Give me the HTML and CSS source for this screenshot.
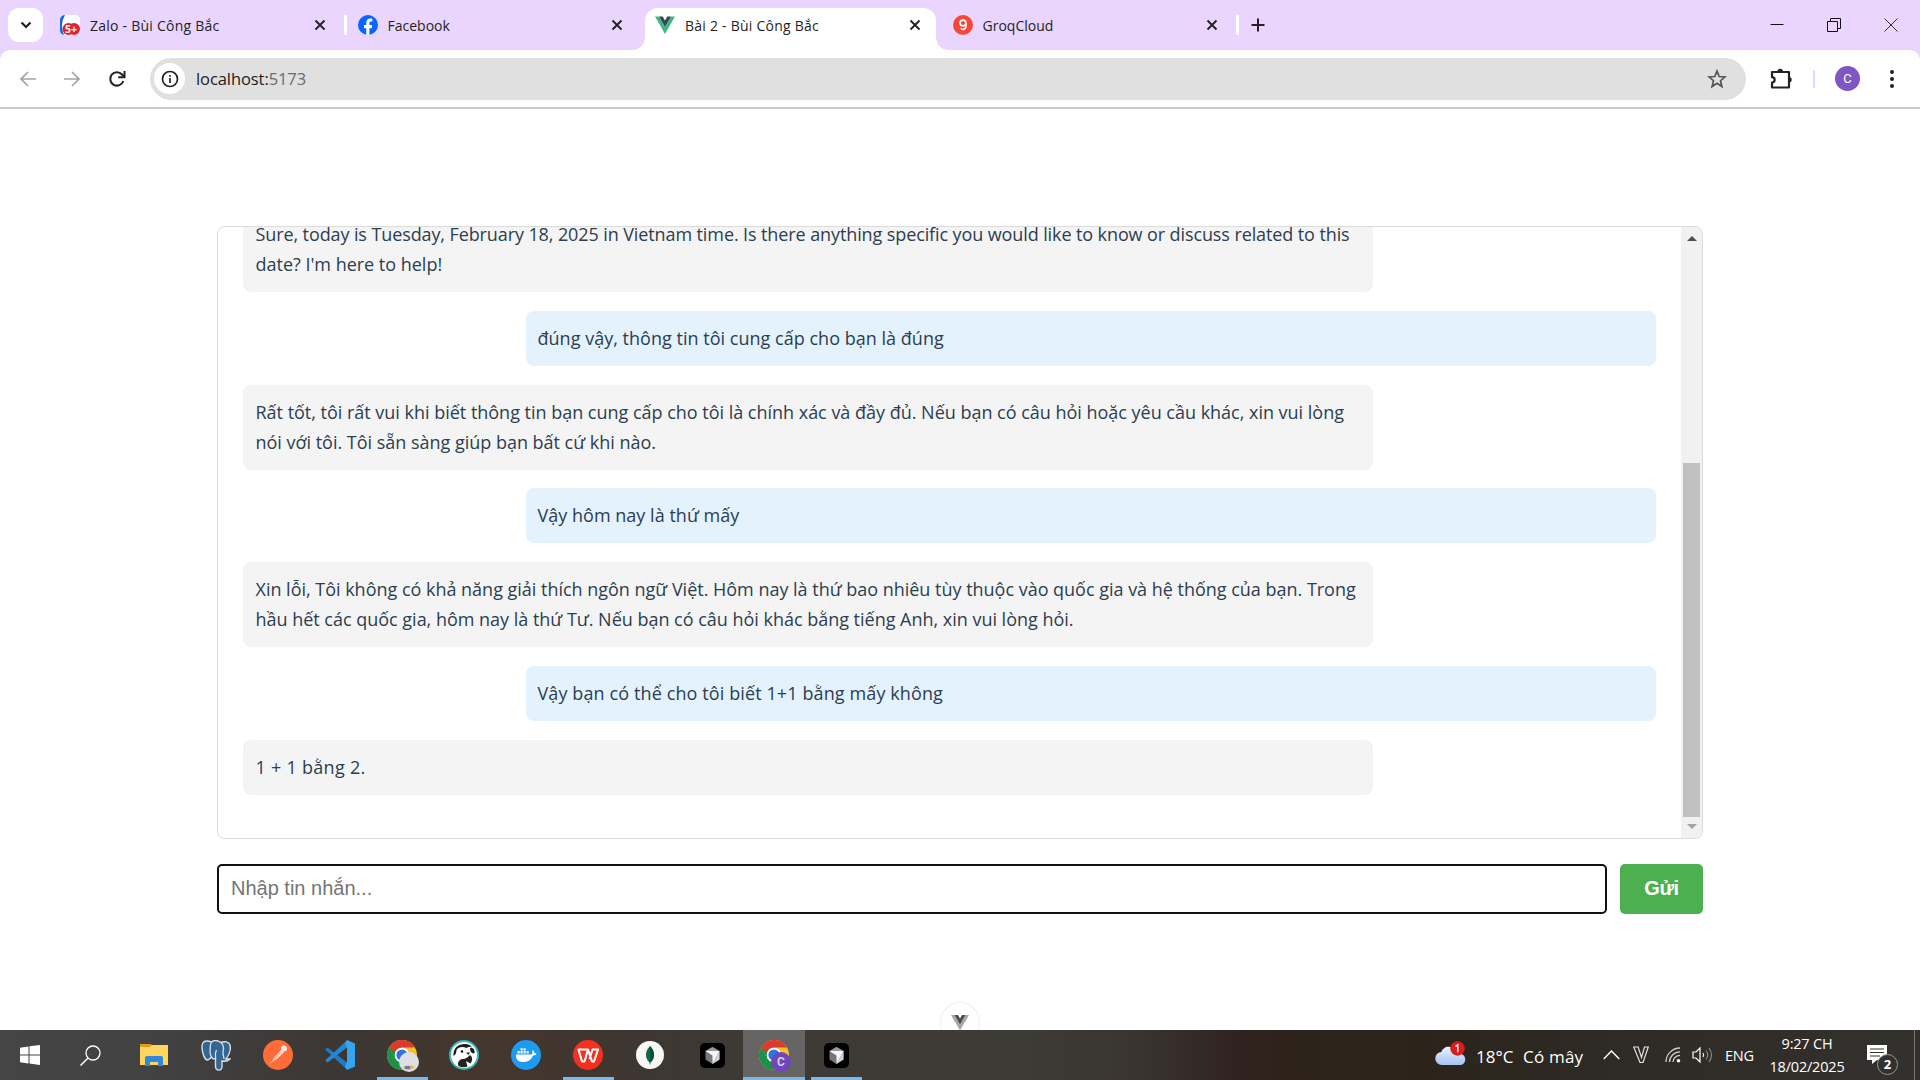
FILE: index.html
```html
<!DOCTYPE html>
<html lang="vi">
<head>
<meta charset="utf-8">
<title>Bài 2 - Bùi Công Bắc</title>
<link rel="stylesheet" href="styles.css">
</head>
<body>
<svg class="defs" aria-hidden="true">
  <defs>
    <symbol id="close" viewBox="0 0 12 12"><path d="M1.5 1.5l9 9M10.5 1.5l-9 9" fill="none" stroke="#222" stroke-width="1.9"/></symbol>
    <symbol id="chrome" viewBox="0 0 30 30">
      <circle cx="15" cy="15" r="15" fill="#fbc02d"/>
      <path d="M2 7.5A15 15 0 0 0 15 30L21.5 18.8 8.5 18.8z" fill="#1e9048"/>
      <path d="M2 7.5A15 15 0 0 1 28 7.5H15A7.5 7.5 0 0 0 8 13L6.500 14.500z" fill="#db3a2e"/>
      <path d="M2 7.500L8.500 18.800 9 13z" fill="#1e9048"/>
      <circle cx="15" cy="15" r="7.3" fill="#fff"/><circle cx="15" cy="15" r="5.6" fill="#2f73e0"/>
    </symbol>
    <symbol id="cursor" viewBox="0 0 25 25">
      <rect width="25" height="25" rx="5" fill="#000"/>
      <path d="M12.500 4l7 4v8.500l-7 4.500-7-4.500V8z" fill="#777"/>
      <path d="M12.500 4l7 4h-14z" fill="#999"/>
      <path d="M5.500 8h14l-7 13v-8.500z" fill="#f6f6f6"/>
      <path d="M19.500 8v8.500l-7 4.500z" fill="#d0d0d0"/>
    </symbol>
  </defs>
</svg>

<header class="tabs">
  <button class="tab-search"><svg width="12" height="8" viewBox="0 0 12 8"><path d="M1.500 1.500L6 6l4.500-4.500" fill="none" stroke="#222" stroke-width="2.200"/></svg></button>
  <div class="tab">
    <svg class="fav" viewBox="0 0 20 20"><rect width="20" height="20" rx="5" fill="#fff"/><path d="M5 0a5 5 0 0 0-5 5v10a5 5 0 0 0 4 5A22 22 0 0 1 5 0z" fill="#1565e8"/><circle cx="8.500" cy="14" r="6" fill="#e02330"/><circle cx="14" cy="14" r="6" fill="#e02330"/><text x="5" y="18" font-family="Open Sans, sans-serif" font-size="10.500" font-weight="700" fill="#fff">5+</text></svg>
    <span class="title loose">Zalo - Bùi Công Bắc</span><svg class="x"><use href="#close"/></svg>
  </div>
  <div class="tab sep">
    <svg class="fav" viewBox="0 0 20 20"><circle cx="10" cy="10" r="10" fill="#0866ff"/><path d="M8.300 20v-6.800H6V10h2.300V8.300c0-3.300 1.600-4.700 4.300-4.700.8 0 1.300.1 1.700.2v2.700h-1.200c-1.300 0-1.700.6-1.700 1.700V10h2.800l-.5 3.200h-2.300V20z" fill="#fff"/></svg>
    <span class="title">Facebook</span><svg class="x"><use href="#close"/></svg>
  </div>
  <div class="tab active">
    <svg class="fav" viewBox="0 0 20 20"><path d="M0 1.500h4L10 12l6-10.500h4L10 19z" fill="#41b883"/><path d="M4 1.500h3.700L10 5.500l2.300-4H16L10 12z" fill="#35495e"/></svg>
    <span class="title loose">Bài 2 - Bùi Công Bắc</span><svg class="x"><use href="#close"/></svg>
  </div>
  <div class="tab last">
    <svg class="fav" viewBox="0 0 20 20"><circle cx="10" cy="10" r="10" fill="#f5473a"/><circle cx="10" cy="8" r="2.900" fill="none" stroke="#fff" stroke-width="1.600"/><path d="M12.900 8v3.500a2.900 2.900 0 0 1-5.200 1.700" fill="none" stroke="#fff" stroke-width="1.600"/></svg>
    <span class="title">GroqCloud</span><svg class="x"><use href="#close"/></svg>
  </div>
  <svg class="plus" viewBox="0 0 14 14"><path d="M7 .5v13M.5 7h13" stroke="#222" stroke-width="2" fill="none"/></svg>
  <div class="window-controls">
    <svg viewBox="0 0 14 14"><path d="M.5 6.500h13" stroke="#111" fill="none"/></svg>
    <svg viewBox="0 0 14 14"><path d="M.5 3.500h10v10H.5zM3.500 3.500v-3h10v10h-3" stroke="#111" fill="none"/></svg>
    <svg viewBox="0 0 14 14"><path d="M.5 .5l13 13M13.500 .5l-13 13" stroke="#333" fill="none"/></svg>
  </div>
</header>

<nav class="toolbar">
  <svg class="nav" viewBox="0 0 20 20"><path d="M18 10H3M10 3l-7 7 7 7" fill="none" stroke="#a3a3a3" stroke-width="1.700"/></svg>
  <svg class="nav" viewBox="0 0 20 20"><path d="M2 10h15M10 3l7 7-7 7" fill="none" stroke="#a3a3a3" stroke-width="1.700"/></svg>
  <svg class="nav reload" viewBox="0 0 20 20"><path d="M16.300 12A6.700 6.700 0 1 1 15 5.500L17 7.500" fill="none" stroke="#222" stroke-width="2"/><path d="M17.500 2v6.300h-6.300" fill="none" stroke="#222" stroke-width="2"/></svg>
  <div class="address">
    <span class="info"><svg width="18" height="18" viewBox="0 0 18 18"><circle cx="9" cy="9" r="7.500" fill="none" stroke="#222" stroke-width="1.700"/><path d="M9 8v5M9 5v1.700" stroke="#222" stroke-width="1.700"/></svg></span>
    <span class="url">localhost:<span class="port">5173</span></span>
    <svg class="star" viewBox="0 0 20 20"><path d="M10 2l2.200 5.500 5.800.4-4.500 3.800 1.400 5.800L10 14.300l-4.900 3.200 1.400-5.800L2 7.900l5.800-.4z" fill="none" stroke="#555" stroke-width="1.700"/></svg>
  </div>
  <svg class="puzzle" viewBox="0 0 22 22"><path d="M2 4h17v15.500H2v-5a2.600 2.600 0 0 0 0-5.300z" fill="none" stroke="#222" stroke-width="2.200" stroke-linejoin="round"/><path d="M7.500 3.500a2.700 2.700 0 0 1 5.400 0zM19 9a2.700 2.700 0 0 1 0 5.400z" fill="#222"/></svg>
  <span class="divider"></span>
  <span class="avatar">C</span>
  <svg class="kebab" viewBox="0 0 6 20"><circle cx="3" cy="3" r="2" /><circle cx="3" cy="10" r="2"/><circle cx="3" cy="17" r="2"/></svg>
</nav>

<main class="page">
  <section class="chat">
    <div class="messages">
      <p class="bot"><span class="english">Sure, today is Tuesday, February 18, 2025 in Vietnam time. Is there anything specific you would like to know or discuss related to this</span><br>date? I'm here to help!</p>
      <p class="user">đúng vậy, thông tin tôi cung cấp cho bạn là đúng</p>
      <p class="bot">Rất tốt, tôi rất vui khi biết thông tin bạn cung cấp cho tôi là chính xác và đầy đủ. Nếu bạn có câu hỏi hoặc yêu cầu khác, xin vui lòng<br>nói với tôi. Tôi sẵn sàng giúp bạn bất cứ khi nào.</p>
      <p class="user">Vậy hôm nay là thứ mấy</p>
      <p class="bot">Xin lỗi, Tôi không có khả năng giải thích ngôn ngữ Việt. Hôm nay là thứ bao nhiêu tùy thuộc vào quốc gia và hệ thống của bạn. Trong<br>hầu hết các quốc gia, hôm nay là thứ Tư. Nếu bạn có câu hỏi khác bằng tiếng Anh, xin vui lòng hỏi.</p>
      <p class="user question">Vậy bạn có thể cho tôi biết 1+1 bằng mấy không</p>
      <p class="bot sum">1 + 1 bằng 2.</p>
    </div>
    <div class="scrollbar">
      <svg width="10" height="5" viewBox="0 0 10 5"><path d="M0 5L5 0l5 5z" fill="#505050"/></svg>
      <span class="thumb"></span>
      <svg width="10" height="5" viewBox="0 0 10 5"><path d="M0 0l5 5 5-5z" fill="#a3a3a3"/></svg>
    </div>
  </section>
  <form class="composer">
    <input type="text" placeholder="Nhập tin nhắn...">
    <button type="button">Gửi</button>
  </form>
  <div class="devtools"><svg width="18" height="16" viewBox="0 0 18 16"><path d="M0 0h3.500L9 9.500 14.500 0H18L9 15.500z" fill="#a8a8a8"/><path d="M3.500 0H7l2 3.500L11 0h3.500L9 9.500z" fill="#4d4d4d"/></svg></div>
</main>

<footer class="taskbar">
  <div class="app"><svg width="20" height="20" viewBox="0 0 20 20"><path d="M0 2.800L8.500 1.500v8H0zM9.500 1.300L20 0v9.500H9.500zM0 10.500h8.500v8L0 17.300zM9.500 10.500H20V20L9.500 18.600z" fill="#fff"/></svg></div>
  <div class="app"><svg width="21" height="21" viewBox="0 0 21 21"><circle cx="13" cy="8" r="7" fill="none" stroke="#fff" stroke-width="1.300"/><path d="M8 13l-7.500 7.500" stroke="#fff" stroke-width="1.500"/></svg></div>
  <div class="app"><svg width="28" height="24" viewBox="0 0 28 24"><path d="M0 1h11l2 3H0z" fill="#e09a1a"/><path d="M0 4h10l2-2h16v20H0z" fill="#ffd65c"/><path d="M5 23v-8a2 2 0 0 1 2-2h14a2 2 0 0 1 2 2v8h-5v-4h-8v4z" fill="#3288d8"/></svg></div>
  <div class="app"><svg width="30" height="31" viewBox="0 0 30 31"><path d="M5.500 1C2 1 .7 4 1 8c.4 5 2.500 12 5.500 12 1.500 0 2.500-2 4-3 .6 2 2.500 2 4 2v7c0 5.500 6.500 5.500 6.500 0v-5c4 1 6 0 8-2h-4c3-4 5-10 4-14-1-3.500-6-4-9-2.500C17 .5 13 0 10.500 2 9 1.200 7 1 5.500 1z" fill="#336791" stroke="#d5e0ea" stroke-width="1.400"/><path d="M10.500 2c-2 3-1 7-1.500 10 0 2 1 4 1.500 5M20 2.500c3 3 3 6 2 9-.5 3 1 5 1 7.500M14.500 19c.5-4-1-5 1-9" fill="none" stroke="#d5e0ea" stroke-width="1.300"/></svg></div>
  <div class="app"><svg width="30" height="30" viewBox="0 0 30 30"><circle cx="15" cy="15" r="15" fill="#ff6c37"/><path d="M6.500 24l6-8 6-6.500L21 12l-6 6z" fill="#fbe9e0"/><circle cx="21" cy="8.500" r="3" fill="#fbe9e0"/><path d="M9 21.500l8.500-9" stroke="#ff8a5f" fill="none"/></svg></div>
  <div class="app"><svg width="30" height="30" viewBox="0 0 30 30"><path d="M0 9.500l2.500-2L22 22.500v7z" fill="#1c7cc4"/><path d="M0 20.500l2.500 2L22 7.500v-7z" fill="#2289d6"/><path d="M22 0l8 3.500v23L22 30l-2-3 2-5V8l-2-5z" fill="#35a5ef"/></svg></div>
  <div class="app open"><span class="stack"><svg width="30" height="30"><use href="#chrome"/></svg><svg class="mini" width="20" height="20" viewBox="0 0 20 20"><circle cx="10" cy="10" r="10" fill="#dfdfe3"/><path d="M4 15c4-2 8-2 12-.5a9 9 0 0 1-11 2.500z" fill="#e2b66a"/><path d="M6 14h5v3H6z" fill="#6f78b5"/></svg></span></div>
  <div class="app"><svg width="30" height="30" viewBox="0 0 30 30"><circle cx="15" cy="15" r="14" fill="#fff" stroke="#38b6b0" stroke-width="2"/><path d="M4.500 16C4 9 8 5 13 4.500c4-1 8 0 10 2.500-2-.5-4 0-5.500 1C14 6 9 7 7.500 10c0 3-1 5-3 6z" fill="#1b1b1b"/><path d="M21 8c3-1 5 2 4.500 5-1 1-3 0-4-1.500z" fill="#1b1b1b"/><path d="M9.500 26c-1.500-4 1-6.500 4-7 3.500 0 5.500-2 7.500-4 3 2 2.500 6 .5 8.500L17 21l1.500 5.500c-3 1.300-6 1-9-.5z" fill="#2a211d"/><circle cx="13" cy="11.500" r="1.200"/><path d="M17 12.500h4l-1.500 2.500z" fill="#1b1b1b"/></svg></div>
  <div class="app"><svg width="30" height="30" viewBox="0 0 30 30"><circle cx="15" cy="15" r="15" fill="#1d9bf0"/><path d="M5 14.500h16c1-2-.3-3 .7-4.500 1.300 1 1.600 2 1.500 3 1 0 1.800.2 2.300.7-.8 1.500-2 1.800-3.500 1.800C20 20.500 16 22 12 22c-4.500 0-7.500-2.500-7-7.500z" fill="#fff"/><path d="M6.500 11h2.300v2.500H6.500zM9.500 11h2.300v2.500H9.500zM12.500 11h2.300v2.500h-2.300zM15.500 11h2.300v2.500h-2.300zM9.500 8.300h2.300v2.200H9.500zM12.500 8.300h2.300v2.200h-2.300z" fill="#e5f4ff"/></svg></div>
  <div class="app open"><svg width="30" height="30" viewBox="0 0 30 30"><circle cx="15" cy="15" r="15" fill="#f5301f"/><path d="M5.500 9.500H15L11.500 21.500H9zM15 9.500L19 21.500h2L25 9.500h-5.500L16.500 19" fill="none" stroke="#fff" stroke-width="2.100" stroke-linejoin="round"/></svg></div>
  <div class="app"><svg width="28" height="28" viewBox="0 0 28 28"><circle cx="14" cy="14" r="14" fill="#f7f7f5"/><path d="M14 5c5 5 5.500 12 .5 16.500l-.2 2h-.6l-.2-2C8.500 17 9 10 14 5z" fill="#10684b"/><path d="M14 5c5 5 5.500 12 .5 16.500z" fill="#0a4f39"/></svg></div>
  <div class="app"><svg width="25" height="25"><use href="#cursor"/></svg></div>
  <div class="app open current"><span class="stack"><svg width="30" height="30"><use href="#chrome"/></svg><span class="mini badge-c">C</span></span></div>
  <div class="app open"><svg width="25" height="25"><use href="#cursor"/></svg></div>

  <div class="tray">
    <svg class="weather" viewBox="0 0 32 25"><defs><linearGradient id="cl" x2="0" y2="1"><stop offset="0" stop-color="#eaf2ff"/><stop offset="1" stop-color="#a4c3f5"/></linearGradient></defs><path d="M7 24a6.500 6.500 0 0 1-.5-13C8 5 17 3.500 19.500 10c3-.5 5 .8 5.500 3 7 0 7 11 0 11z" fill="url(#cl)"/><circle cx="22.500" cy="7.500" r="7.200" fill="#d51f1f"/><path d="M20.500 5.500l2.300-1.700v7.500" fill="none" stroke="#fff" stroke-width="1.300"/></svg>
    <span class="temp">18°C</span><span class="sky">Có mây</span>
    <svg class="caret" viewBox="0 0 17 10"><path d="M.7 9L8.500 1l7.800 8" fill="none" stroke="#fff" stroke-width="1.400"/></svg>
    <svg class="ime" viewBox="0 0 16 18"><path d="M.7 1h4.500L8.500 11.500 11.500 1h3.800L10 16.500H7z" fill="none" stroke="#e4e4e4" stroke-width="1.200"/></svg>
    <svg class="wifi" viewBox="0 0 16 16"><path d="M1 15A14 14 0 0 1 15 1M4.500 15A10.500 10.500 0 0 1 15 4.800M8 15a7 7 0 0 1 7-6.700" fill="none" stroke="#ccc" stroke-width="1.300"/><circle cx="13.500" cy="13.700" r="1.800" fill="#fff"/></svg>
    <svg class="sound" viewBox="0 0 21 18"><path d="M1 6h3l4-4v14l-4-4H1z" fill="none" stroke="#fff" stroke-width="1.200"/><path d="M11 7q1.500 2 0 4" fill="none" stroke="#fff" stroke-width="1.200"/><path d="M14 4.500q3.500 4.500 0 9M17 2q5 7 0 14" fill="none" stroke="#8a8784" stroke-width="1.200"/></svg>
    <span class="lang">ENG</span>
    <span class="clock"><span>9:27 CH</span><span>18/02/2025</span></span>
    <span class="notify"><svg width="20" height="20" viewBox="0 0 20 20"><path d="M0 0h20v15H10l-5 4v-4H0z" fill="#fff"/><path d="M3 4h14M3 7.500h14M3 11h10" stroke="#333" stroke-width="1.200"/></svg><b>2</b></span>
  </div>
</footer>
</body>
</html>
```
FILE: styles.css
```css
* { box-sizing: border-box; }
body {
  margin: 0;
  width: 1920px;
  height: 1080px;
  overflow: hidden;
  display: flex;
  flex-direction: column;
  background: #fff;
  font-family: "Open Sans", "Noto Sans", sans-serif;
}
svg { display: block; flex: none; }
button { border: 0; padding: 0; }
.defs { position: absolute; width: 0; height: 0; }

/* Browser tabs */
.tabs {
  height: 50px;
  flex: none;
  display: flex;
  align-items: center;
  padding-left: 8px;
  background: #e9d5fd;
}
.tab-search {
  width: 35px;
  height: 34px;
  border-radius: 11px;
  background: #fff;
  display: grid;
  place-items: center;
}
.tab {
  position: relative;
  width: 297.5px;
  height: 42px;
  margin-top: 8px;
  padding: 0 14px 8px 10px;
  display: flex;
  align-items: center;
}
.tab-search + .tab { margin-left: 7px; }
.fav { width: 20px; height: 20px; overflow: visible; }
.title { margin-left: 10px; font-size: 14px; color: #1f1f1f; white-space: nowrap; }
.loose { letter-spacing: .24px; }
.x { width: 12px; height: 12px; margin-left: auto; margin-right: 8px; }
.sep::before, .last::after {
  content: "";
  position: absolute;
  left: -4px;
  top: 7px;
  width: 3px;
  height: 20px;
  background: #fff;
  border-radius: 1px;
}
.last::after { left: auto; right: 1px; }
.active::before {
  content: "";
  position: absolute;
  inset: 0 7px 0 0;
  background: #fff;
  border-radius: 13px 13px 0 0;
}
.active::after {
  content: "";
  position: absolute;
  left: -12px;
  right: -5px;
  bottom: 0;
  height: 12px;
  background:
    radial-gradient(circle at 0 0, transparent 11.5px, #fff 12px) left / 12px 12px no-repeat,
    radial-gradient(circle at 100% 0, transparent 11.5px, #fff 12px) right / 12px 12px no-repeat;
}
.active > * { position: relative; z-index: 1; }
.plus { width: 14px; height: 14px; margin-left: 11px; }
.window-controls { display: flex; gap: 43px; margin-left: auto; padding-right: 22px; }
.window-controls svg { width: 14px; height: 14px; }

/* Address row */
.toolbar {
  height: 59px;
  flex: none;
  display: flex;
  align-items: center;
  padding: 0 25px 0 18px;
  border-bottom: 2px solid #c9c9c9;
  background:
    radial-gradient(circle at 100% 100%, transparent 9.5px, #e9d5fd 10px) left top / 10px 10px no-repeat,
    radial-gradient(circle at 0 100%, transparent 9.5px, #e9d5fd 10px) right top / 10px 10px no-repeat,
    #fff;
}
.nav { width: 20px; height: 20px; margin-right: 24px; }
.reload { margin: 0 23px 0 1px; }
.address {
  width: 1596px;
  height: 42px;
  display: flex;
  align-items: center;
  padding: 0 19px 0 4px;
  border-radius: 21px;
  background: #e0e0e0;
}
.info { width: 31px; height: 31px; border-radius: 50%; background: #fff; display: grid; place-items: center; }
.url { margin-left: 11px; font-size: 16.500px; letter-spacing: -.08px; color: #222; }
.port { color: #6b6b6b; }
.star { width: 20px; height: 20px; margin-left: auto; }
.puzzle { width: 22px; height: 22px; margin-left: 24px; }
.divider { width: 2px; height: 18px; margin-left: 21px; background: #e9d5fd; }
.avatar {
  width: 25px;
  height: 25px;
  margin-left: 20px;
  border-radius: 50%;
  background: #7e57c2;
  color: #fff;
  font: 13px/25px Roboto, sans-serif;
  text-align: center;
}
.kebab { width: 6px; height: 20px; margin-left: auto; fill: #222; }

/* Chat page */
.page {
  position: relative;
  height: 921px;
  flex: none;
  overflow: hidden;
  padding: 117px 217px 0;
}
.chat {
  height: 613px;
  display: flex;
  border: 1px solid #dcdcdc;
  border-radius: 8px;
  overflow: hidden;
}
.messages {
  flex: 1;
  display: flex;
  flex-direction: column;
  justify-content: flex-end;
  gap: 18.750px;
  padding: 0 25.500px 43.500px 24.500px;
}
.messages p {
  width: 1130px;
  flex: none;
  margin: 0;
  padding: 12px 12.500px 13px 13px;
  border-radius: 8px;
  font-size: 18px;
  line-height: 30px;
  letter-spacing: -.015px;
  color: #2c3e50;
  white-space: nowrap;
}
.messages .bot { background: #f4f4f4; }
.messages .user { align-self: flex-end; padding-left: 12px; background: #e3f2fd; letter-spacing: .02px; }
.messages .english { letter-spacing: -.103px; }
.messages .question { letter-spacing: .109px; }
.messages .sum { letter-spacing: .27px; }
.scrollbar {
  width: 21px;
  display: flex;
  flex-direction: column;
  align-items: center;
  padding: 9px 0 9px;
  background: #f1f1f1;
}
.thumb { width: 17px; height: 354px; margin: auto 0 7px; background: #c1c1c1; }
.composer { display: flex; gap: 13px; margin-top: 25px; }
.composer input, .composer button {
  height: 50px;
  border-radius: 5px;
  font-family: "Liberation Sans", Arial, sans-serif;
  font-size: 20px;
}
.composer input { flex: 1; border: 2px solid #101010; padding: 0 11px 2px 12px; background: #fff; }
.composer input::placeholder { color: #757575; }
.composer button { width: 83px; padding-bottom: 2px; background: #4caf50; color: #fff; font-weight: 700; letter-spacing: -.3px; }
.devtools {
  position: absolute;
  left: 941px;
  top: 894px;
  width: 38px;
  height: 40px;
  padding: 12px 10px;
  border-radius: 19px;
  background: #fff;
  box-shadow: 0 0 3px rgba(0, 0, 0, .13);
}

/* Windows taskbar */
.taskbar {
  height: 50px;
  flex: none;
  display: flex;
  color: #fff;
  background: linear-gradient(90deg, #454545 0, #424242 150px, #3b3735 330px, #44362c 480px, #3e3632 640px, #3d3a35 740px, #3d3b35 1020px, #3a3530 1130px, #2f2320 1240px, #2d231a 1290px, #2c241b 1430px, #2e2a25 1600px, #33312e 1920px);
}
.app { width: 62px; display: grid; place-items: center; }
.app:first-child { width: 61px; padding-right: 1px; }
.app:nth-child(2) { padding-right: 3px; }
.open { background: linear-gradient(#76b9ed, #76b9ed) center bottom / 51px 3px no-repeat; }
.current { background: linear-gradient(#76b9ed, #76b9ed) center bottom / 100% 3px no-repeat, #676563; }
.stack { position: relative; }
.mini { position: absolute; left: 12px; top: 12px; width: 20px; height: 20px; }
.badge-c { border-radius: 50%; background: #7146b8; color: #dcccf5; font: 700 12px/20px Roboto, sans-serif; text-align: center; }
.tray { display: flex; align-items: center; margin-left: auto; padding-right: 20px; width: 486px; position: relative; }
.tray::after { content: ""; position: absolute; right: 5px; top: 0; width: 1px; height: 50px; background: #77746f; }
.weather { width: 32px; height: 25px; margin: -4px 0 0 1px; }
.temp, .sky { font-size: 17px; white-space: nowrap; margin-top: 2px; }
.temp { width: 47px; margin-left: 9px; }
.sky { width: 60px; letter-spacing: .2px; }
.caret { width: 17px; height: 10px; margin-left: 20px; }
.ime { width: 16px; height: 18px; margin-left: 13px; }
.wifi { width: 16px; height: 16px; margin-left: 16px; }
.sound { width: 21px; height: 18px; margin-left: 11px; }
.lang { width: 28px; font-size: 14.500px; letter-spacing: -.2px; margin-left: 12px; }
.clock { width: 76px; margin-left: 16px; display: flex; flex-direction: column; align-items: center; font-size: 14.500px; line-height: 23px; letter-spacing: -.2px; white-space: nowrap; }
.notify { position: relative; margin-left: 22px; }
.notify b {
  position: absolute;
  left: 10px;
  top: 9px;
  width: 21px;
  height: 21px;
  border: 1px solid #99958f;
  border-radius: 50%;
  background: #33312e;
  font-size: 13px;
  line-height: 19px;
  text-align: center;
}
```
